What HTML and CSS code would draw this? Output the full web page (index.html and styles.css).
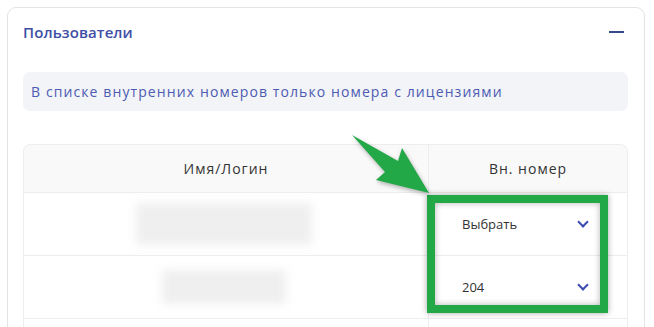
FILE: index.html
```html
<!DOCTYPE html>
<html lang="ru">
<head>
    <meta charset="UTF-8">
    <meta name="viewport" content="width=device-width, initial-scale=1.0">
    <title>Пользователи</title>
    <link rel="stylesheet" href="styles.css">
</head>
<body>
    <section class="card">
        <!-- Header -->
        <div class="card-header">
            <h2 class="card-title">Пользователи</h2>
            <span class="collapse-btn"></span>
        </div>

        <div class="notice">В списке внутренних номеров только номера с лицензиями</div>

        <!-- Users table -->
        <div class="users-table">
            <div class="table-row table-head">
                <div class="cell cell-name">Имя/Логин</div>
                <div class="cell cell-ext">Вн. номер</div>
            </div>
            <div class="table-row">
                <div class="cell cell-name"><span class="blurred blurred-wide"></span></div>
                <div class="cell cell-ext">
                    <div class="select">Выбрать <span class="chevron"></span></div>
                </div>
            </div>
            <div class="table-row">
                <div class="cell cell-name"><span class="blurred blurred-narrow"></span></div>
                <div class="cell cell-ext">
                    <div class="select">204 <span class="chevron"></span></div>
                </div>
            </div>
            <div class="table-row">
                <div class="cell cell-name"></div>
                <div class="cell cell-ext"></div>
            </div>

            <!-- Annotation -->
            <div class="highlight"></div>
        </div>
    </section>

    <svg class="arrow" width="100" height="80" viewBox="0 0 100 80">
        <polygon points="12,10 58,36 62,23 89,68 36,55 45,47" fill="#22a846"/>
    </svg>
</body>
</html>
```

FILE: styles.css
```css
* {
    margin: 0;
    padding: 0;
    box-sizing: border-box;
}

body {
    background: #ffffff;
    font-family: 'Open Sans', sans-serif;
    color: #333333;
    height: 100vh;
    overflow: hidden;
}

/* Card */
.card {
    margin: 7px 0 0 7px;
    width: 638px;
    height: 340px;
    border: 1px solid #e4e4e6;
    border-radius: 9px;
    padding: 0 16px 0 15px;
}

.card-header {
    height: 48px;
    display: flex;
    align-items: center;
    justify-content: space-between;
}

.card-title {
    font-size: 15px;
    font-weight: 600;
    color: #3e4fa6;
    letter-spacing: 0.1px;
}

.collapse-btn {
    width: 15px;
    height: 2px;
    background: #34498a;
    margin-right: 4px;
}

.notice {
    margin-top: 16px;
    height: 39px;
    background: #f3f4f7;
    border-radius: 7px;
    padding-left: 8px;
    display: flex;
    align-items: center;
    font-size: 14px;
    letter-spacing: 1.1px;
    color: #4c5bb3;
}

/* Table */
.users-table {
    position: relative;
    margin-top: 33px;
    border: 1px solid #ededed;
    border-bottom: none;
    border-radius: 8px 8px 0 0;
}

.table-row {
    display: flex;
    height: 63px;
    border-top: 1px solid #ededed;
}

.table-row:first-child {
    border-top: none;
}

.table-head {
    height: 47px;
    background: #f9f9f9;
    border-radius: 8px 8px 0 0;
}

.cell {
    display: flex;
    align-items: center;
}

.cell-name {
    width: 404px;
    justify-content: center;
}

.cell-ext {
    flex: 1;
    border-left: 1px solid #ededed;
    justify-content: center;
}

.table-head .cell {
    font-size: 14px;
    letter-spacing: 1px;
    color: #333333;
}

.blurred {
    display: block;
    background: #efefef;
    filter: blur(5px);
}

.blurred-wide {
    width: 176px;
    height: 42px;
    margin-right: 4px;
}

.blurred-narrow {
    width: 124px;
    height: 34px;
    margin-right: 4px;
}

.select {
    width: 100%;
    padding: 0 38px 0 33px;
    display: flex;
    align-items: center;
    justify-content: space-between;
    font-size: 13px;
    color: #333333;
}

.chevron {
    width: 8px;
    height: 8px;
    border-right: 2px solid #3b4db0;
    border-bottom: 2px solid #3b4db0;
    transform: rotate(45deg);
    margin-top: -4px;
    margin-right: 2px;
}

/* Annotation overlay */
.highlight {
    position: absolute;
    left: 403px;
    top: 50px;
    width: 181px;
    height: 118px;
    border: 8px solid #22a846;
    box-shadow: 0 0 6px rgba(0, 0, 0, 0.35), inset 0 0 6px rgba(0, 0, 0, 0.3);
}

.arrow {
    position: absolute;
    left: 340px;
    top: 125px;
    filter: drop-shadow(1px 2px 2px rgba(0, 0, 0, 0.3));
}
```
